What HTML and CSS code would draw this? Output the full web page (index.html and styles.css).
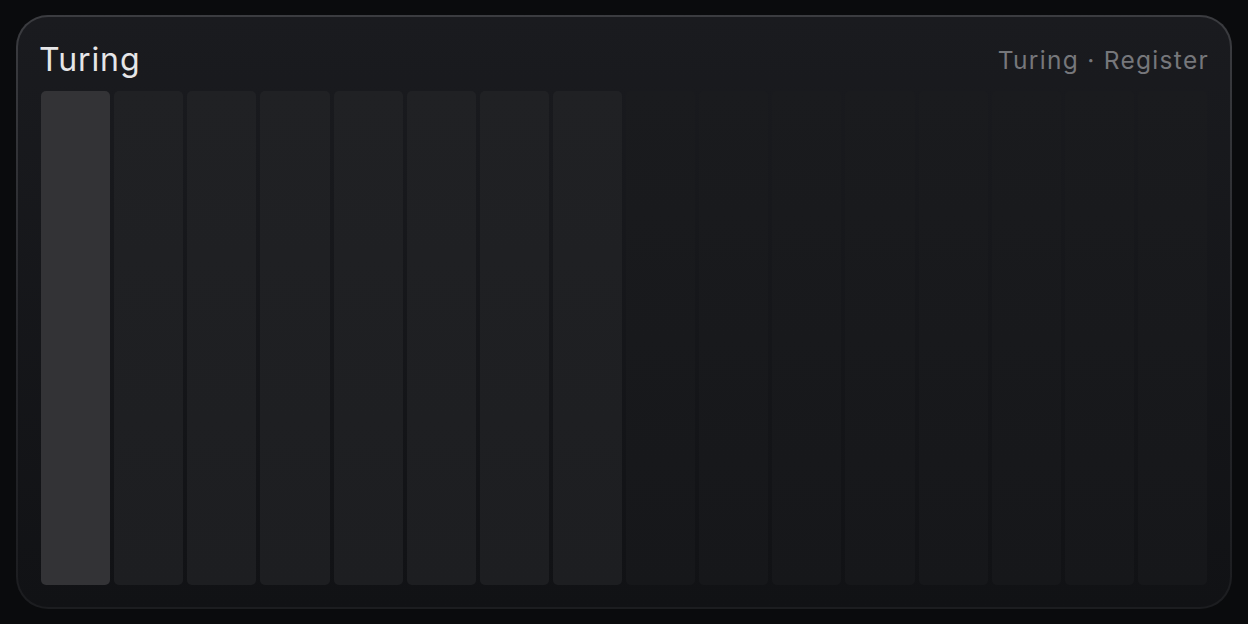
FILE: index.html
```html
<!DOCTYPE html>
<html>
<head>
<meta charset="utf-8">
<link rel="stylesheet" href="styles.css">
</head>
<body>
<div class="card">
  <div class="header">
    <div class="title">Turing</div>
    <div class="meta">Turing · Register</div>
  </div>
  <div class="bars">
    <div class="bar on"></div>
    <div class="bar mid"></div>
    <div class="bar mid"></div>
    <div class="bar mid"></div>
    <div class="bar mid"></div>
    <div class="bar mid"></div>
    <div class="bar mid"></div>
    <div class="bar mid"></div>
    <div class="bar off"></div>
    <div class="bar off"></div>
    <div class="bar off"></div>
    <div class="bar off"></div>
    <div class="bar off"></div>
    <div class="bar off"></div>
    <div class="bar off"></div>
    <div class="bar off"></div>
  </div>
</div>
</body>
</html>
```

FILE: styles.css
```css
html, body {
  margin: 0;
  padding: 0;
  background: #0a0b0d;
  width: 1248px;
  height: 624px;
  overflow: hidden;
  font-family: "Inter", "Noto Sans", sans-serif;
}

body {
  padding: 15px 16px 0 16px;
  box-sizing: border-box;
}

.card {
  width: 1216px;
  height: 594px;
  box-sizing: border-box;
  border: 2px solid transparent;
  border-radius: 32px;
  background:
    linear-gradient(180deg, #1a1b1f 0%, #111215 100%) padding-box,
    linear-gradient(180deg, #3b3c40 0%, #26272b 55%, #1c1d20 100%) border-box;
  padding: 22px 23px 22px 23px;
  display: flex;
  flex-direction: column;
}

.header {
  display: flex;
  justify-content: space-between;
  align-items: center;
  height: 52px;
  margin: 0 -2px 0 -2px;
  padding-bottom: 10px;
  box-sizing: border-box;
}

.title {
  font-size: 32px;
  color: #e6e6e8;
  font-weight: 400;
  line-height: 42px;
  letter-spacing: 0.9px;
}

.meta {
  font-size: 24.5px;
  color: #76777b;
  letter-spacing: 1.3px;
  line-height: 42px;
  margin-top: -1px;
}

.bars {
  flex: 1;
  display: flex;
  gap: 4px;
}

.bar {
  flex: 1;
  border-radius: 5px;
}

.bar.on { background: #333336; }
.bar.mid { background: linear-gradient(180deg, #202124 0%, #1d1e21 100%); }
.bar.off { background: linear-gradient(180deg, #1a1b1e 0%, #16171a 100%); }
```
